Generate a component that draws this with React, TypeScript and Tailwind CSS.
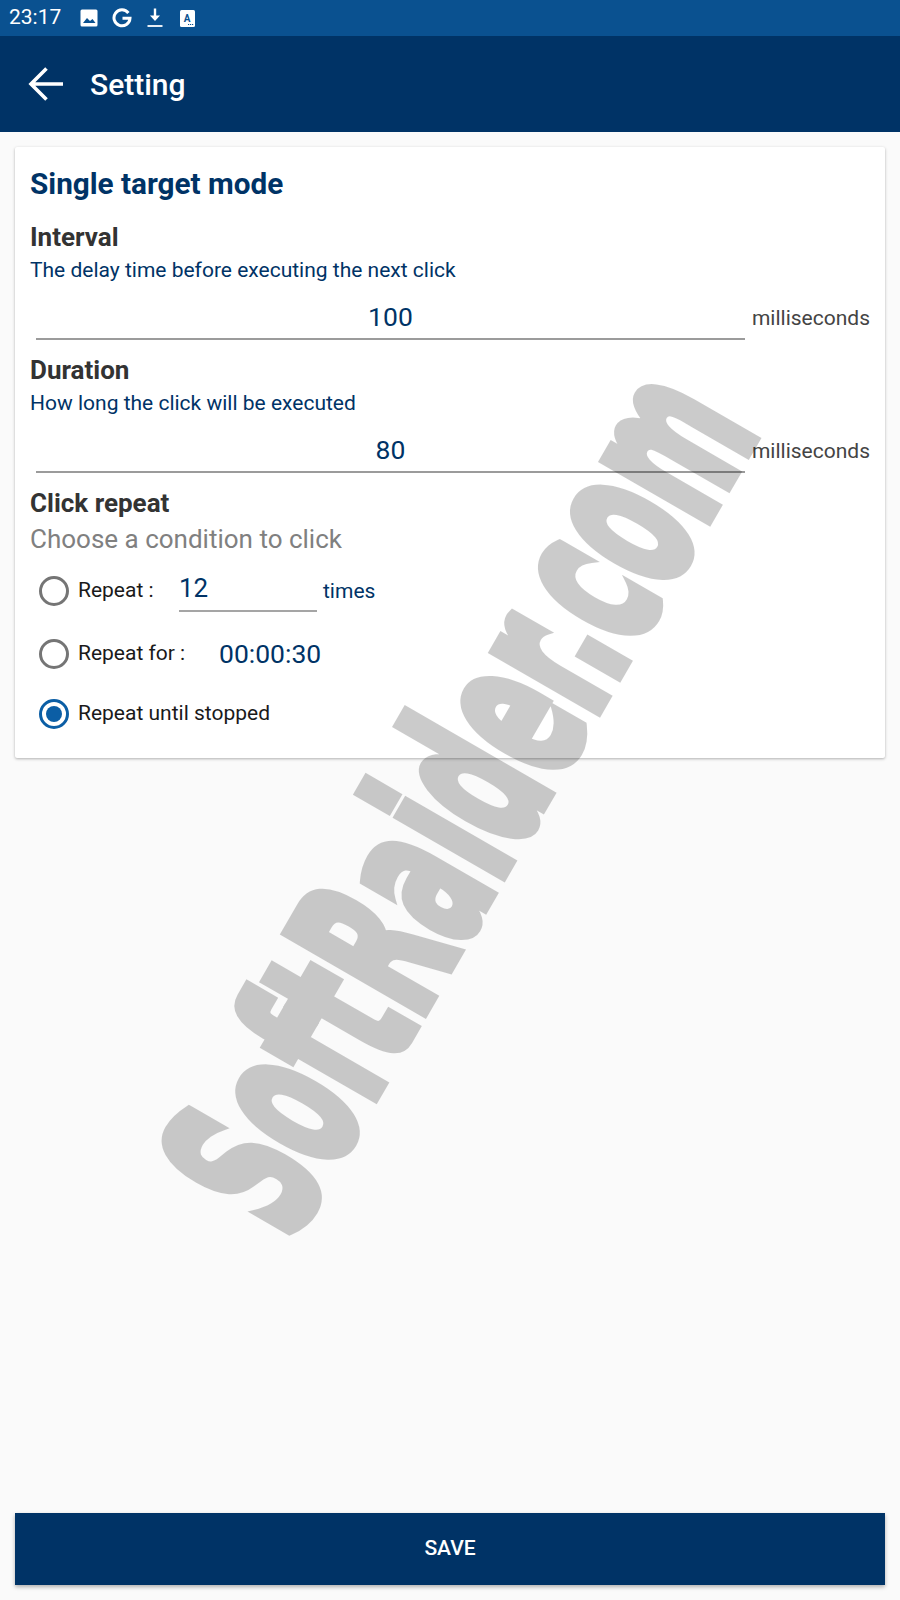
const NAVY = 'text-[#003366]';

const StatusIcons = () => (
  <div className="flex items-center gap-[14px] ml-[19px]">
    {/* image */}
    <svg width="18" height="18" viewBox="0 0 18 18">
      <rect x="0.5" y="0.5" width="17" height="17" rx="1.5" fill="#fff" />
      <path d="M3 14 L7 9 L10 12 L12.5 10 L15.5 14 Z" fill="#0a5190" />
    </svg>
    {/* G */}
    <svg width="20" height="20" viewBox="0 0 20 20" fill="none">
      <path d="M16.4 5 A8 8 0 1 0 18 10.2 H10.5" stroke="#fff" strokeWidth="3" />
    </svg>
    {/* download */}
    <svg width="16" height="20" viewBox="0 0 16 20" fill="none" className="ml-[1px]">
      <path d="M8 0.5 V11" stroke="#fff" strokeWidth="2.4" />
      <path d="M3 7.5 L8 13 L13 7.5 Z" fill="#fff" />
      <path d="M0.5 18 H15.5" stroke="#fff" strokeWidth="1.8" />
    </svg>
    {/* A */}
    <svg width="15" height="17" viewBox="0 0 15 17" className="ml-[3px]">
      <rect width="15" height="17" rx="1.5" fill="#fff" />
      <text x="7" y="11.5" textAnchor="middle" fontSize="10" fontWeight="700" fontFamily="Roboto" fill="#0a5190">
        A
      </text>
      <path d="M8 14.5 h1.2 M10 14.5 h1.2 M12 14.5 h1.2" stroke="#0a5190" strokeWidth="1.2" />
    </svg>
  </div>
);

const NumberField = ({ value }: { value: string }) => (
  <div className="flex items-end h-[36px] pl-[6px]">
    <div className={`w-[709px] h-[36px] border-b-2 border-[#9b9b9b] text-center text-[26.5px] leading-[26px] ${NAVY}`}>{value}</div>
    <span className="ml-[7px] mb-[10px] text-[21px] leading-[24px] text-[#444444]">milliseconds</span>
  </div>
);

const Radio = ({ checked }: { checked?: boolean }) =>
  checked ? (
    <span className="flex items-center justify-center w-[30px] h-[30px] rounded-full border-[3px] border-[#0b5ea5]">
      <span className="w-[16px] h-[16px] rounded-full bg-[#0b5ea5]" />
    </span>
  ) : (
    <span className="w-[30px] h-[30px] rounded-full border-[3px] border-[#757575]" />
  );

export default function App() {
  return (
    <div className="relative w-[900px] h-[1600px] overflow-hidden bg-[#fafafa] font-['Roboto',sans-serif]">
      {/* status bar */}
      <div className="flex items-center h-[36px] pl-[9px] bg-[#0a5190] text-white text-[21px]">
        <span>23:17</span>
        <StatusIcons />
      </div>

      {/* toolbar */}
      <div className="flex items-center h-[96px] bg-[#003366] text-white">
        <svg width="36" height="36" viewBox="0 0 36 36" fill="none" className="ml-[28px]">
          <path d="M35 18 H3 M18.5 2.5 L3 18 L18.5 33.5" stroke="#fff" strokeWidth="3.6" />
        </svg>
        <span className="ml-[26px] text-[30px] font-medium">Setting</span>
      </div>

      {/* card */}
      <div className="mx-[15px] mt-[15px] h-[611px] rounded-[2px] bg-white px-[15px] pt-[20px] shadow-[0_1px_3px_rgba(0,0,0,0.3)]">
        <div className={`text-[29.7px] leading-[34px] font-bold ${NAVY}`}>Single target mode</div>

        <div className="mt-[21px] text-[26px] leading-[30px] font-bold text-[#333333]">Interval</div>
        <div className={`mt-[4px] text-[21px] leading-[28px] ${NAVY}`}>The delay time before executing the next click</div>
        <div className="mt-[20px]">
          <NumberField value="100" />
        </div>

        <div className="mt-[15px] text-[26px] leading-[30px] font-bold text-[#333333]">Duration</div>
        <div className={`mt-[4px] text-[21px] leading-[28px] ${NAVY}`}>How long the click will be executed</div>
        <div className="mt-[20px]">
          <NumberField value="80" />
        </div>

        <div className="mt-[15px] text-[26px] leading-[30px] font-bold text-[#333333]">Click repeat</div>
        <div className="mt-[5px] text-[26px] leading-[32px] text-[#808080]">Choose a condition to click</div>

        <div className="flex items-center h-[44px] mt-[14px] ml-[9px] gap-[9px]">
          <Radio />
          <span className="w-[92px] text-[21px] text-[#1a1a1a]">Repeat :</span>
          <span className={`self-start w-[138px] h-[43px] border-b-2 border-[#a5a5a5] text-[26px] leading-[38px] ${NAVY}`}>12</span>
          <span className={`ml-[-3px] mt-[2px] text-[21px] ${NAVY}`}>times</span>
        </div>
        <div className="flex items-center h-[44px] mt-[19px] ml-[9px] gap-[9px]">
          <Radio />
          <span className="w-[132px] text-[21px] text-[#1a1a1a]">Repeat for :</span>
          <span className={`text-[26.5px] ${NAVY}`}>00:00:30</span>
        </div>
        <div className="flex items-center h-[44px] mt-[16px] ml-[9px] gap-[9px]">
          <Radio checked />
          <span className="text-[21px] text-[#1a1a1a]">Repeat until stopped</span>
        </div>
      </div>

      {/* save */}
      <div className="absolute left-[15px] top-[1513px] flex items-center justify-center w-[870px] h-[72px] bg-[#003366] text-white text-[21px] font-medium shadow-[0_2px_4px_rgba(0,0,0,0.3)]">
        SAVE
      </div>

      {/* watermark laid over the page */}
      <div className="absolute left-[460px] top-[799px] w-0 h-0 pointer-events-none">
        <div className="absolute left-0 top-0 -translate-x-1/2 -translate-y-1/2 -rotate-[60deg] opacity-20">
          <div className="scale-x-[0.51] whitespace-nowrap text-black font-['DejaVu_Sans',sans-serif] font-bold text-[215px] leading-none [-webkit-text-stroke:12px_#000]">
            SoftRaider.com
          </div>
        </div>
      </div>
    </div>
  );
}
